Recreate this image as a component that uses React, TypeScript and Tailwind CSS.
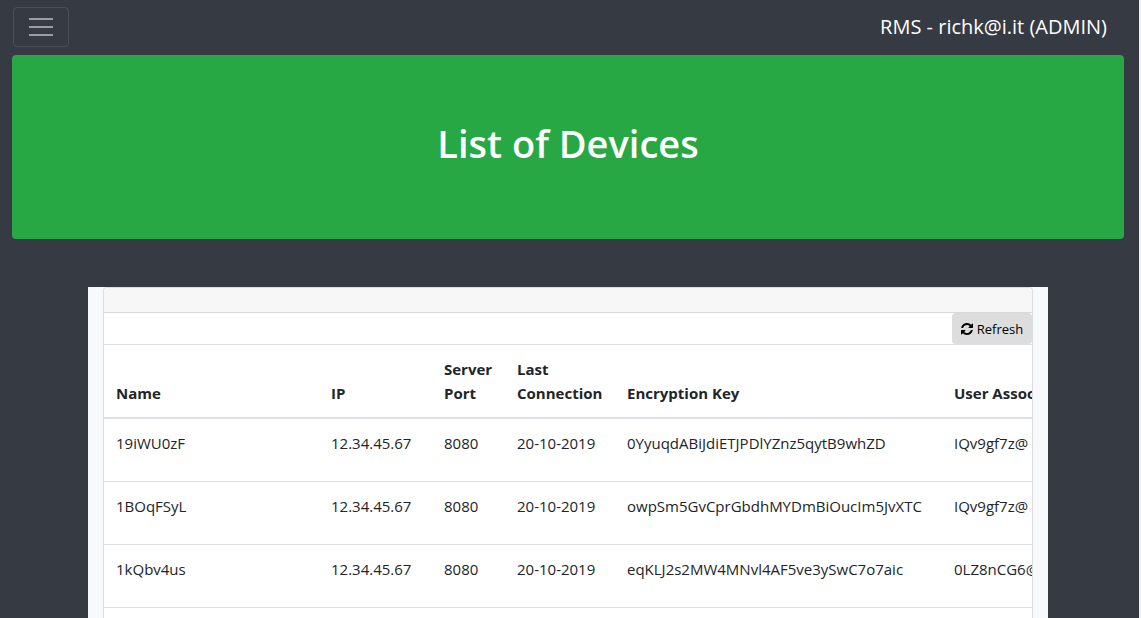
import React from "react";

interface Device {
  name: string;
  ip: string;
  port: number;
  lastConnection: string;
  encryptionKey: string;
  user: string;
}

const devices: Device[] = [
  { name: "19iWU0zF", ip: "12.34.45.67", port: 8080, lastConnection: "20-10-2019", encryptionKey: "0YyuqdABiJdiETJPDlYZnz5qytB9whZD", user: "IQv9gf7z@" },
  { name: "1BOqFSyL", ip: "12.34.45.67", port: 8080, lastConnection: "20-10-2019", encryptionKey: "owpSm5GvCprGbdhMYDmBiOucIm5JvXTC", user: "IQv9gf7z@" },
  { name: "1kQbv4us", ip: "12.34.45.67", port: 8080, lastConnection: "20-10-2019", encryptionKey: "eqKLJ2s2MW4MNvl4AF5ve3ySwC7o7aic", user: "0LZ8nCG6@" },
];

function RefreshIcon() {
  return (
    <svg viewBox="0 0 1536 1536" className="size-3 shrink-0" fill="currentColor" aria-hidden="true">
      <path d="M1511 928q0 5-1 7-64 268-268 434.500T764 1536q-146 0-282.500-55T238 1324l-129 129q-19 19-45 19t-45-19-19-45V960q0-26 19-45t45-19h448q26 0 45 19t19 45-19 45l-137 137q71 66 161 102t187 36q134 0 250-65t186-179q11-17 53-117 8-23 30-23h192q13 0 22.500 9.500t9.500 22.500zm25-800v448q0 26-19 45t-45 19h-448q-26 0-45-19t-19-45 19-45l138-138Q969 256 768 256q-134 0-250 65T332 500q-11 17-53 117-8 23-30 23H50q-13 0-22.500-9.500T18 608v-7q65-268 270-434.500T768 0q146 0 284 55.500T1297 212l130-129q19-19 45-19t45 19 19 45z" />
    </svg>
  );
}

export default function App() {
  return (
    <div className="flex min-h-screen flex-col border-r-2 border-[#f1f1f1] bg-[#363a42] font-['Open_Sans',sans-serif] text-[#212529]">
      <nav className="flex items-center justify-between pt-[7px] pr-8 pb-2 pl-[13px]">
        <button
          type="button"
          aria-label="Toggle navigation"
          className="flex h-10 w-14 items-center justify-center rounded border border-white/10 text-white/50"
        >
          <svg viewBox="0 0 30 30" className="size-[30px]" stroke="currentColor" strokeWidth="2" aria-hidden="true">
            <path d="M3 7h24M3 15h24M3 23h24" />
          </svg>
        </button>
        <span className="text-[20px] leading-[30px] text-white">RMS - richk@i.it (ADMIN)</span>
      </nav>

      <header className="mr-[15px] ml-3 rounded bg-[#28a745] px-8 pt-16 pb-[72px] text-center">
        <h1 className="text-[38px] leading-[48px] font-semibold text-white">List of Devices</h1>
      </header>

      <main className="mt-12 mr-[3px] flex flex-1 justify-center">
        <div className="flex w-full max-w-[960px] flex-col bg-[#f8f9fa] px-[15px]">
          <section className="flex min-w-0 flex-1 flex-col rounded-t border border-b-0 border-[#dcdddf] bg-white">
            <div className="h-6 rounded-t bg-[#f7f7f7]" />
            <div className="flex justify-end border-t border-[#d8d9da]">
              <button
                type="button"
                className="flex h-[31px] w-20 items-center justify-center gap-1 rounded bg-[#dddddd] text-[13px] leading-5 text-black"
              >
                <RefreshIcon />
                Refresh
              </button>
            </div>
            <div className="flex-1 overflow-hidden pb-1">
              <table className="w-[1080px] table-fixed border-collapse text-left text-[15px] leading-6">
                <colgroup>
                  <col className="w-[215px]" />
                  <col className="w-[113px]" />
                  <col className="w-[73px]" />
                  <col className="w-[110px]" />
                  <col className="w-[327px]" />
                  <col />
                </colgroup>
                <thead>
                  <tr className="h-[73px] border-t border-b-2 border-t-[#dee2e6] border-b-[#dee2e6] align-bottom font-bold">
                    <th scope="col" className="p-3">Name</th>
                    <th scope="col" className="p-3">IP</th>
                    <th scope="col" className="p-3">Server Port</th>
                    <th scope="col" className="p-3">Last<br />Connection</th>
                    <th scope="col" className="p-3">Encryption Key</th>
                    <th scope="col" className="p-3">User Associated</th>
                  </tr>
                </thead>
                <tbody>
                  {devices.map((d) => (
                    <tr key={d.name} className="h-[63px] border-b border-[#dee2e6] align-top whitespace-nowrap">
                      <td className="p-3">{d.name}</td>
                      <td className="p-3">{d.ip}</td>
                      <td className="p-3">{d.port}</td>
                      <td className="p-3">{d.lastConnection}</td>
                      <td className="p-3">{d.encryptionKey}</td>
                      <td className="p-3">{d.user}</td>
                    </tr>
                  ))}
                </tbody>
              </table>
            </div>
          </section>
        </div>
      </main>
    </div>
  );
}
